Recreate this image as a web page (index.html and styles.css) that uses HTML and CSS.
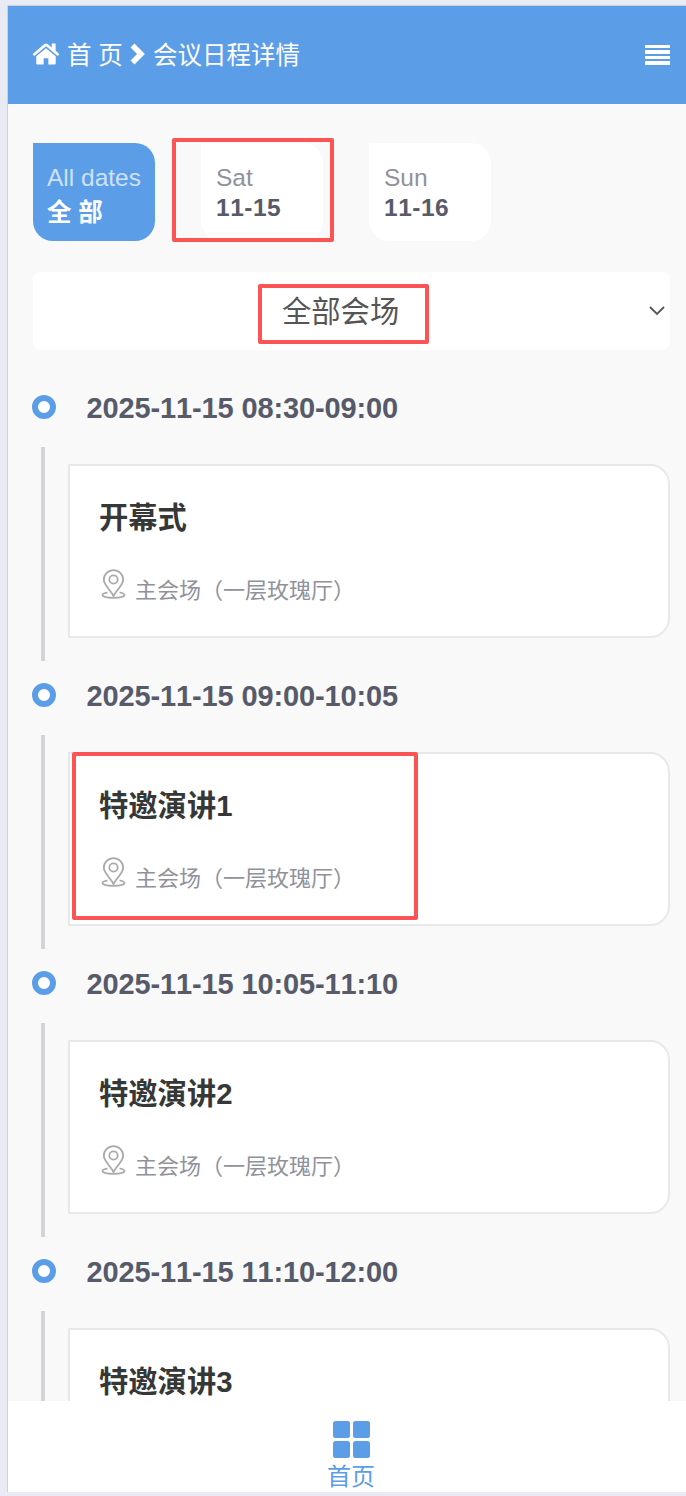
FILE: index.html
```
<!DOCTYPE html>
<html lang="zh-CN">
<head>
  <meta charset="UTF-8">
  <meta name="viewport" content="width=device-width, initial-scale=1.0">
  <title>会议日程详情</title>
  <link rel="stylesheet" href="styles.css">
</head>
<body>
  <svg class="sprite">
    <symbol id="icon-pin" viewBox="0 0 26 32">
      <path d="M12.500 27C9.500 21 2.800 16 2.800 10.800a9.700 9.700 0 0 1 19.400 0C22.200 16 15.500 21 12.500 27z"/>
      <circle cx="12.500" cy="10.500" r="4.200"/>
      <path d="M6.500 23.400C3.500 24 1.500 24.900 1.500 26c0 1.700 4.800 2.900 11 2.900s11-1.200 11-2.900c0-1.100-2-2-5-2.600"/>
    </symbol>
  </svg>

  <div class="app">
    <header class="header">
      <nav class="crumbs">
        <svg class="icon-home" viewBox="0 0 28 24" fill="#fff">
          <path d="M14 6.300 4.300 14.300V21.600a1 1 0 0 0 1 1h6.300v-6.300h4.800v6.300h6.300a1 1 0 0 0 1-1v-7.300z"/>
          <path d="M27 11.700 23.600 8.800V1.500h-3.800v4L15.600 2c-1-.8-2.200-.8-3.200 0L1 11.700c-.3.300-.3.600-.1.900l.9 1c.3.300.6.300.9.100L14 4.200l11.300 9.500c.3.200.6.200.9-.1l.9-1c.2-.3.200-.6-.1-.9z"/>
        </svg>
        <span class="crumb-home">首 页</span>
        <svg class="icon-next" viewBox="0 0 15 22"><path d="M2.500 2.500 11 11 2.500 19.500"/></svg>
        <span>会议日程详情</span>
      </nav>
      <div class="menu"><i></i><i></i><i></i><i></i></div>
    </header>

    <main class="content">
      <div class="dates">
        <div class="date active"><span>All dates</span><b>全 部</b></div>
        <div class="date"><span>Sat</span><b>11-15</b></div>
        <div class="date"><span>Sun</span><b>11-16</b></div>
      </div>

      <div class="place">
        <span>全部会场</span>
        <svg class="icon-down" viewBox="0 0 16 10"><path d="M1 1l7 7 7-7"/></svg>
      </div>

      <section class="item">
        <div class="time"><i class="dot"></i>2025-11-15 08:30-09:00</div>
        <div class="body">
          <div class="card">
            <h3>开幕式</h3>
            <p><svg class="icon-pin"><use href="#icon-pin"/></svg>主会场（一层玫瑰厅）</p>
          </div>
        </div>
      </section>
      <section class="item">
        <div class="time"><i class="dot"></i>2025-11-15 09:00-10:05</div>
        <div class="body">
          <div class="card">
            <h3>特邀演讲1</h3>
            <p><svg class="icon-pin"><use href="#icon-pin"/></svg>主会场（一层玫瑰厅）</p>
          </div>
        </div>
      </section>
      <section class="item">
        <div class="time"><i class="dot"></i>2025-11-15 10:05-11:10</div>
        <div class="body">
          <div class="card">
            <h3>特邀演讲2</h3>
            <p><svg class="icon-pin"><use href="#icon-pin"/></svg>主会场（一层玫瑰厅）</p>
          </div>
        </div>
      </section>
      <section class="item">
        <div class="time"><i class="dot"></i>2025-11-15 11:10-12:00</div>
        <div class="body">
          <div class="card">
            <h3>特邀演讲3</h3>
          </div>
        </div>
      </section>
    </main>

    <footer class="tabbar">
      <div class="grid"><i></i><i></i><i></i><i></i></div>
      <span>首页</span>
    </footer>
  </div>

  <div class="mark mark-date"></div>
  <div class="mark mark-place"></div>
  <div class="mark mark-card"></div>
</body>
</html>
```
FILE: styles.css
```
* {
  box-sizing: border-box;
}

body {
  margin: 0;
  height: 1496px;
  padding: 5px 0 4px 7px;
  overflow: hidden;
  position: relative;
  background: #e8ebf4;
  font-family: "Liberation Sans", "Noto Sans CJK SC", sans-serif;
  font-kerning: none;
}

.sprite {
  display: none;
}

.app {
  height: 1487px;
  display: flex;
  flex-direction: column;
  border-top: 1px solid #cdd0d8;
  border-left: 1px solid #cdd0d8;
  background: #f9f9f9;
}

.header {
  flex: none;
  height: 98px;
  padding: 0 16px 1px 24px;
  display: flex;
  align-items: center;
  justify-content: space-between;
  background: #5c9de8;
  color: #fff;
  font-size: 24.5px;
}

.crumbs {
  display: flex;
  align-items: center;
  white-space: nowrap;
}

.crumbs span {
  padding-bottom: 3px;
}

.icon-home {
  width: 28px;
  height: 24px;
  margin: 0 7px 2px 0;
}

.crumb-home {
  width: 56px;
}

.icon-next {
  width: 15px;
  height: 22px;
  margin: 0 8px 1px 7px;
  fill: none;
  stroke: #fff;
  stroke-width: 5.500;
}

.menu {
  width: 25px;
  display: grid;
  gap: 2px;
}

.menu i {
  height: 3.500px;
  background: #fff;
}

.content {
  flex: 1;
  min-height: 0;
  overflow: hidden;
  padding: 39px 16px 0 24px;
}

.dates {
  display: flex;
  gap: 46px;
  padding-left: 1px;
}

.date {
  width: 122px;
  height: 98px;
  padding: 20px 0 0 14px;
  border-radius: 0 20px 20px 20px;
  background: #fff;
  color: #575b69;
  font-size: 24.5px;
  line-height: 30px;
  white-space: nowrap;
}

.date + .date {
  padding-left: 15px;
}

.date span,
.date b {
  display: block;
}

.date span {
  color: #8f929c;
}

.date b {
  letter-spacing: 0.5px;
}

.date.active {
  background: #5c9de8;
  color: #fff;
}

.date.active span {
  color: #cee2f8;
}

.date.active b {
  padding-top: 5px;
  letter-spacing: 0;
}

.place {
  height: 78px;
  margin: 31px 0 20px 1px;
  padding: 0 5px 0 249px;
  display: flex;
  align-items: center;
  justify-content: space-between;
  border-radius: 8px;
  background: #fff;
  color: #555;
  font-size: 29.300px;
}

.place span {
  padding-bottom: 5px;
}

.icon-down {
  width: 16px;
  height: 10px;
  fill: none;
  stroke: #555;
  stroke-width: 1.800;
}

.item {
  height: 288px;
}

.time {
  height: 77px;
  display: flex;
  align-items: center;
  color: #575b69;
  font-size: 29px;
  font-weight: bold;
  letter-spacing: -0.130px;
}

.dot {
  width: 24px;
  height: 24px;
  margin: 0 30.500px 3px 0;
  border: 6px solid #5c9de8;
  border-radius: 50%;
  background: #fff;
}

.body {
  height: 214px;
  margin-left: 9px;
  padding: 17px 0 0 23px;
  border-left: 4px solid #d3d4d8;
}

.card {
  height: 174px;
  padding: 32px 0 0 29px;
  border: 2px solid #e8e8e8;
  border-radius: 0 20px 20px 0;
  background: #fff;
}

.card h3 {
  margin: 0;
  color: #363838;
  font-size: 29.300px;
  line-height: 40px;
}

.card p {
  margin: 29px 0 0;
  display: flex;
  color: #8f929c;
  font-size: 22px;
  line-height: 47px;
}

.icon-pin {
  width: 26px;
  height: 32px;
  margin: 2px 8px 0 2px;
  fill: none;
  stroke: #aaa;
  stroke-width: 1.800;
}

.tabbar {
  flex: none;
  height: 91px;
  padding: 20px 0 0 8px;
  display: flex;
  flex-direction: column;
  align-items: center;
  background: #fff;
  color: #5c9de8;
  font-size: 24px;
  line-height: 38px;
}

.grid {
  display: grid;
  grid-template-columns: 17px 17px;
  gap: 3px;
}

.grid i {
  height: 17px;
  border-radius: 2.500px;
  background: #5c9de8;
}

/* red highlight boxes over the page */
.mark {
  position: absolute;
  border: 4px solid #fc5354;
  border-radius: 2px;
}

.mark-date {
  left: 172px;
  top: 138px;
  width: 162px;
  height: 104px;
}

.mark-place {
  left: 258px;
  top: 284px;
  width: 171px;
  height: 60px;
}

.mark-card {
  left: 72px;
  top: 752px;
  width: 346px;
  height: 168px;
}
```
